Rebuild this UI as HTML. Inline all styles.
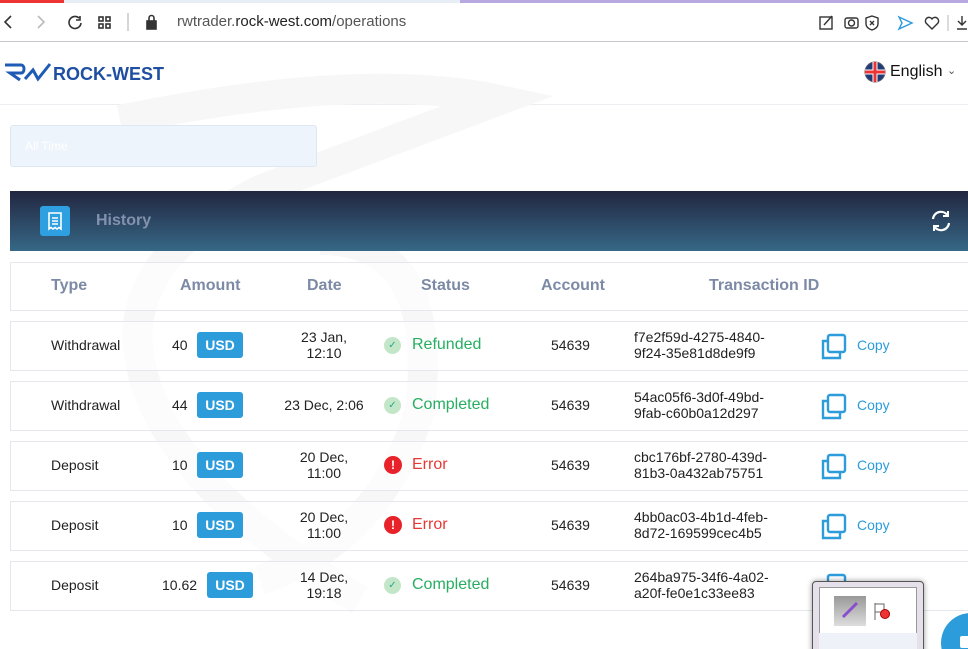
<!DOCTYPE html>
<html><head><meta charset="utf-8"><style>
*{margin:0;padding:0;box-sizing:border-box}
html,body{width:968px;height:649px;overflow:hidden}
body{background:#fff;font-family:"Liberation Sans",sans-serif;position:relative}
.a{position:absolute}
.row{position:absolute;left:10px;width:970px;height:50px;border:1px solid #e4e7ee;background:rgba(255,255,255,.6)}
.t{position:absolute;font-size:14px;color:#222;white-space:nowrap}
.usd{position:absolute;background:#2d9cdb;color:#fff;font-weight:bold;font-size:14px;width:46px;height:26px;line-height:26px;text-align:center;border-radius:3px}
.c{text-align:center;line-height:16px}
.st{position:absolute;font-size:16px;white-space:nowrap;display:flex;align-items:center;height:20px}
.ok{display:inline-block;width:17px;height:17px;border-radius:50%;background:#c4e6c8;color:#2a8;font-size:10px;text-align:center;line-height:17px;margin-right:11px}
.er{display:inline-block;width:18px;height:18px;border-radius:50%;background:#e8222a;color:#fff;font-size:12px;font-weight:bold;text-align:center;line-height:18px;margin-right:10px}
.h{position:absolute;top:277px;font-size:16px;font-weight:bold;color:#7d8aa6}
</style></head><body>
<div class="a" style="left:0;top:0;width:968px;height:3px;background:#e8eef6"></div>
<div class="a" style="left:0;top:0;width:64px;height:3px;background:#e33"></div>
<div class="a" style="left:460px;top:0;width:508px;height:3px;background:#b8a8e0"></div>
<div class="a" style="left:0;top:41px;width:968px;height:1px;background:#c4c7cc"></div>
<svg class="a" style="left:0;top:10px" width="420" height="24" fill="none" stroke="#333" stroke-width="1.6">
<path d="M11 6l-6 6 6 6"/><path d="M38 6l6 6-6 6" stroke="#bbb"/>
<path d="M79 8a6 6 0 1 0 2 5M80 6v4h-4"/>
<rect x="99" y="7" width="4" height="4"/><rect x="106" y="7" width="4" height="4"/><rect x="99" y="14" width="4" height="4"/><rect x="106" y="14" width="4" height="4"/>
<path d="M128 3v18" stroke="#ccc"/>
<rect x="147" y="11" width="9" height="8" fill="#333"/><path d="M149 11V8a2.5 2.5 0 0 1 5 0v3"/>
</svg>
<div class="a" style="left:177px;top:13px;font-size:15px;color:#555">rwtrader.<span style="color:#222">rock-west.com</span>/operations</div>
<svg class="a" style="left:815px;top:12px" width="153" height="22" fill="none" stroke="#333" stroke-width="1.4">
<rect x="5" y="5" width="12" height="12"/><path d="M9 13l8-9"/>
<rect x="30" y="6" width="13" height="10" rx="2"/><circle cx="36.5" cy="11" r="3"/>
<path d="M57 4l6 2v6c0 3-3 5-6 6-3-1-6-3-6-6V6z"/><path d="M55 9l4 4M59 9l-4 4"/>
<path d="M84 5l13 6-13 6 3-6z" stroke="#2d9cdb"/>
<path d="M117 17l-6-6a3.5 3.5 0 0 1 6-4 3.5 3.5 0 0 1 6 4z"/>
<path d="M133 3v16" stroke="#ccc"/><path d="M147 4v9M143 9l4 4 4-4M142 17h10"/>
</svg>
<svg class="a" style="left:5px;top:62px" width="48" height="20" fill="none" stroke="#1e5bb5" stroke-width="3">
<path d="M0 3h16c4 0 4 8 0 8H5l10 7"/><path d="M20 17l8-9 5 9 12-15"/>
</svg>
<div class="a" style="left:53px;top:64px;font-size:18px;font-weight:bold;color:#1e4fa0">ROCK-WEST</div>
<svg class="a" style="left:864px;top:61px" width="22" height="22"><circle cx="11" cy="11" r="10" fill="#1c3d7a" stroke="#556" /><path d="M1 11h20M11 1v20" stroke="#fff" stroke-width="5"/><path d="M1 11h20M11 1v20" stroke="#e33" stroke-width="3"/></svg>
<div class="a" style="left:890px;top:63px;font-size:16px;color:#111">English</div>
<div class="a" style="left:947px;top:64px;font-size:11px;color:#555">⌄</div>
<div class="a" style="left:0;top:104px;width:968px;height:1px;background:#eceef2"></div>
<svg class="a" style="left:60px;top:60px" width="600" height="580" fill="none" stroke="#f7f7f7" stroke-width="30">
<path d="M60 60 Q300 10 440 40 L200 130 Q60 200 80 300 Q100 420 300 540"/>
<path d="M260 180 Q380 180 360 350 Q320 480 200 520"/>
</svg>
<div class="a" style="left:10px;top:125px;width:307px;height:42px;background:#eef4fb;border:1px solid #dde8f4;border-radius:3px"></div>
<div class="a" style="left:25px;top:139px;font-size:12px;color:#fff">All Time</div>
<div class="a" style="left:10px;top:191px;width:958px;height:60px;background:linear-gradient(#222640,#366886)"></div>
<div class="a" style="left:40px;top:206px;width:30px;height:30px;background:#2e9fe0;border-radius:3px"></div>
<svg class="a" style="left:46px;top:211px" width="18" height="20" fill="none" stroke="#fff" stroke-width="1.6"><path d="M3 2h12v16l-2-1.5-2 1.5-2-1.5-2 1.5-2-1.5-2 1.5z"/><path d="M6 7h6M6 10h6M6 13h6"/></svg>
<div class="a" style="left:96px;top:212px;font-size:16px;font-weight:bold;color:#8391ac">History</div>
<svg class="a" style="left:928px;top:208px" width="26" height="26" fill="none" stroke="#fff" stroke-width="2.2"><path d="M5 11a8 8 0 0 1 15-3M21 15a8 8 0 0 1-15 3"/><path d="M20 3v5h-5M6 23v-5h5" stroke-width="2"/></svg>
<div class="row" style="top:262px;height:49px"></div>
<div class="h" style="left:51px">Type</div>
<div class="h" style="left:180px">Amount</div>
<div class="h" style="left:307px">Date</div>
<div class="h" style="left:421px">Status</div>
<div class="h" style="left:541px">Account</div>
<div class="h" style="left:709px">Transaction ID</div>
<div class="row" style="top:321px"></div>
<div class="row" style="top:381px"></div>
<div class="row" style="top:441px"></div>
<div class="row" style="top:501px"></div>
<div class="row" style="top:561px"></div>

<div class="t" style="left:51px;top:337px">Withdrawal</div>
<div class="t" style="left:172px;top:337px">40</div><div class="usd" style="left:197px;top:332px">USD</div>
<div class="t c" style="left:294px;top:329px;width:60px">23 Jan,<br>12:10</div>
<div class="st" style="left:384px;top:335px;color:#27ae60"><span class="ok">✓</span>Refunded</div>
<div class="t" style="left:551px;top:337px">54639</div>
<div class="t" style="left:634px;top:329px;line-height:16px">f7e2f59d-4275-4840-<br>9f24-35e81d8de9f9</div>

<div class="t" style="left:51px;top:397px">Withdrawal</div>
<div class="t" style="left:172px;top:397px">44</div><div class="usd" style="left:197px;top:392px">USD</div>
<div class="t c" style="left:284px;top:397px;width:80px">23 Dec, 2:06</div>
<div class="st" style="left:384px;top:395px;color:#27ae60"><span class="ok">✓</span>Completed</div>
<div class="t" style="left:551px;top:397px">54639</div>
<div class="t" style="left:634px;top:389px;line-height:16px">54ac05f6-3d0f-49bd-<br>9fab-c60b0a12d297</div>

<div class="t" style="left:51px;top:457px">Deposit</div>
<div class="t" style="left:172px;top:457px">10</div><div class="usd" style="left:197px;top:452px">USD</div>
<div class="t c" style="left:294px;top:449px;width:60px">20 Dec,<br>11:00</div>
<div class="st" style="left:384px;top:455px;color:#e53935"><span class="er">!</span>Error</div>
<div class="t" style="left:551px;top:457px">54639</div>
<div class="t" style="left:634px;top:449px;line-height:16px">cbc176bf-2780-439d-<br>81b3-0a432ab75751</div>

<div class="t" style="left:51px;top:517px">Deposit</div>
<div class="t" style="left:172px;top:517px">10</div><div class="usd" style="left:197px;top:512px">USD</div>
<div class="t c" style="left:294px;top:509px;width:60px">20 Dec,<br>11:00</div>
<div class="st" style="left:384px;top:515px;color:#e53935"><span class="er">!</span>Error</div>
<div class="t" style="left:551px;top:517px">54639</div>
<div class="t" style="left:634px;top:509px;line-height:16px">4bb0ac03-4b1d-4feb-<br>8d72-169599cec4b5</div>

<div class="t" style="left:51px;top:577px">Deposit</div>
<div class="t" style="left:162px;top:577px">10.62</div><div class="usd" style="left:207px;top:572px">USD</div>
<div class="t c" style="left:294px;top:569px;width:60px">14 Dec,<br>19:18</div>
<div class="st" style="left:384px;top:575px;color:#27ae60"><span class="ok">✓</span>Completed</div>
<div class="t" style="left:551px;top:577px">54639</div>
<div class="t" style="left:634px;top:569px;line-height:16px">264ba975-34f6-4a02-<br>a20f-fe0e1c33ee83</div>

<svg class="a" style="left:820px;top:333px" width="28" height="264" fill="none" stroke="#2d9cdb" stroke-width="2.4">
<g><rect x="8" y="2" width="17" height="17" rx="2"/><path d="M8 8H3v17h17v-6"/></g>
<g transform="translate(0,60)"><rect x="8" y="2" width="17" height="17" rx="2"/><path d="M8 8H3v17h17v-6"/></g>
<g transform="translate(0,120)"><rect x="8" y="2" width="17" height="17" rx="2"/><path d="M8 8H3v17h17v-6"/></g>
<g transform="translate(0,180)"><rect x="8" y="2" width="17" height="17" rx="2"/><path d="M8 8H3v17h17v-6"/></g>
<g transform="translate(0,240)"><rect x="8" y="2" width="17" height="17" rx="2"/></g>
</svg>
<div class="a" style="left:857px;top:337px;font-size:14px;color:#2d9cdb">Copy</div>
<div class="a" style="left:857px;top:397px;font-size:14px;color:#2d9cdb">Copy</div>
<div class="a" style="left:857px;top:457px;font-size:14px;color:#2d9cdb">Copy</div>
<div class="a" style="left:857px;top:517px;font-size:14px;color:#2d9cdb">Copy</div>
<div class="a" style="left:812px;top:581px;width:112px;height:80px;background:#e6e0ea;border:1px solid #555;border-radius:4px;box-shadow:0 0 6px rgba(0,0,0,.4)"></div>
<div class="a" style="left:819px;top:587px;width:98px;height:70px;background:#fff;border:1px solid #999"></div>
<div class="a" style="left:819px;top:633px;width:98px;height:20px;background:#eef2f8"></div>
<div class="a" style="left:834px;top:596px;width:32px;height:30px;background:linear-gradient(#999,#ddd)"></div>
<svg class="a" style="left:840px;top:600px" width="20" height="20"><path d="M3 17L17 3" stroke="#8a4fd0" stroke-width="3"/></svg>
<svg class="a" style="left:872px;top:601px" width="20" height="20" fill="none" stroke="#666"><path d="M3 2v17M3 3h9v8H3"/><circle cx="13" cy="13" r="4.5" fill="#e33" stroke="#a00"/></svg>
<div class="a" style="left:941px;top:613px;width:60px;height:60px;border-radius:50%;background:#2d9cdb"></div>
<div class="a" style="left:960px;top:636px;width:10px;height:12px;background:#fff;border-radius:2px"></div>
</body></html>
